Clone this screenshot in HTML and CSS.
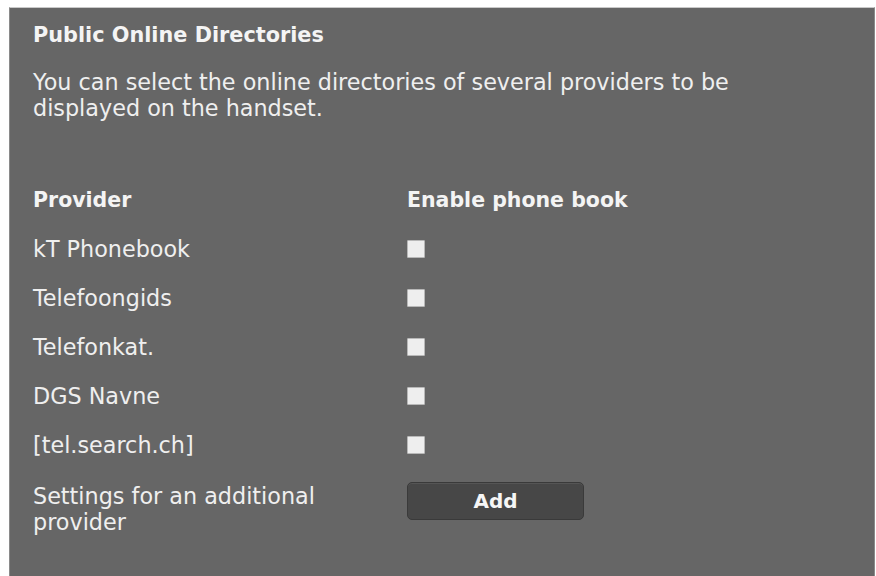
FILE: index.html
```html
<!DOCTYPE html>
<html lang="en">
<head>
<meta charset="utf-8">
<title>Public Online Directories</title>
<link rel="stylesheet" href="styles.css">
</head>
<body>
<section class="panel">
  <h1 class="panel-title">Public Online Directories</h1>
  <p class="panel-intro">You can select the online directories of several providers to be displayed on the handset.</p>

  <div class="dir-grid">
    <div class="cell head">Provider</div>
    <div class="cell head">Enable phone book</div>

    <div class="cell">kT Phonebook</div>
    <div class="cell"><span class="check"></span></div>

    <div class="cell">Telefoongids</div>
    <div class="cell"><span class="check"></span></div>

    <div class="cell">Telefonkat.</div>
    <div class="cell"><span class="check"></span></div>

    <div class="cell">DGS Navne</div>
    <div class="cell"><span class="check"></span></div>

    <div class="cell">[tel.search.ch]</div>
    <div class="cell"><span class="check"></span></div>

    <div class="cell extra extra-label">Settings for an additional provider</div>
    <div class="cell extra"><button class="btn" type="button">Add</button></div>
  </div>
</section>
</body>
</html>
```

FILE: styles.css
```css
html, body {
  margin: 0;
  padding: 0;
  background: #ffffff;
}

body {
  padding: 7px 1px 0 9px;
  font-family: "DejaVu Sans", Verdana, sans-serif;
  color: #efefef;
}

.panel {
  background: #666666;
  border-top: 1px solid #c9c9c9;
  border-left: 1px solid #8a8a8a;
  border-right: 1px solid #8a8a8a;
  min-height: 620px;
  padding: 14px 0 0 23px;
  box-sizing: border-box;
}

.panel-title {
  margin: 0;
  font-size: 20.8px;
  font-weight: bold;
  line-height: 26px;
  color: #f4f4f4;
}

.panel-intro {
  margin: 21px 0 0;
  width: 760px;
  font-size: 22.3px;
  line-height: 26px;
}

.dir-grid {
  display: grid;
  grid-template-columns: 374px auto;
  margin-top: 54px;
}

.cell {
  display: flex;
  align-items: center;
  min-height: 49px;
  font-size: 22.3px;
  line-height: 26px;
}

.cell.head {
  font-weight: bold;
  font-size: 20.5px;
  color: #f4f4f4;
}

.cell.extra {
  align-items: flex-start;
  padding-top: 14px;
}

.cell.extra-label {
  max-width: 310px;
}

.check {
  width: 16px;
  height: 16px;
  background: #eeeeee;
  border: 1px solid #b8b8b8;
  border-radius: 1px;
}

.btn {
  width: 177px;
  height: 38px;
  margin-top: -1px;
  background: #474747;
  border: 1px solid #3a3a3a;
  border-radius: 5px;
  box-shadow: inset 0 1px 0 #555555;
  color: #f6f6f6;
  font-family: "DejaVu Sans", Verdana, sans-serif;
  font-size: 20px;
  font-weight: bold;
  padding: 0;
}
```
